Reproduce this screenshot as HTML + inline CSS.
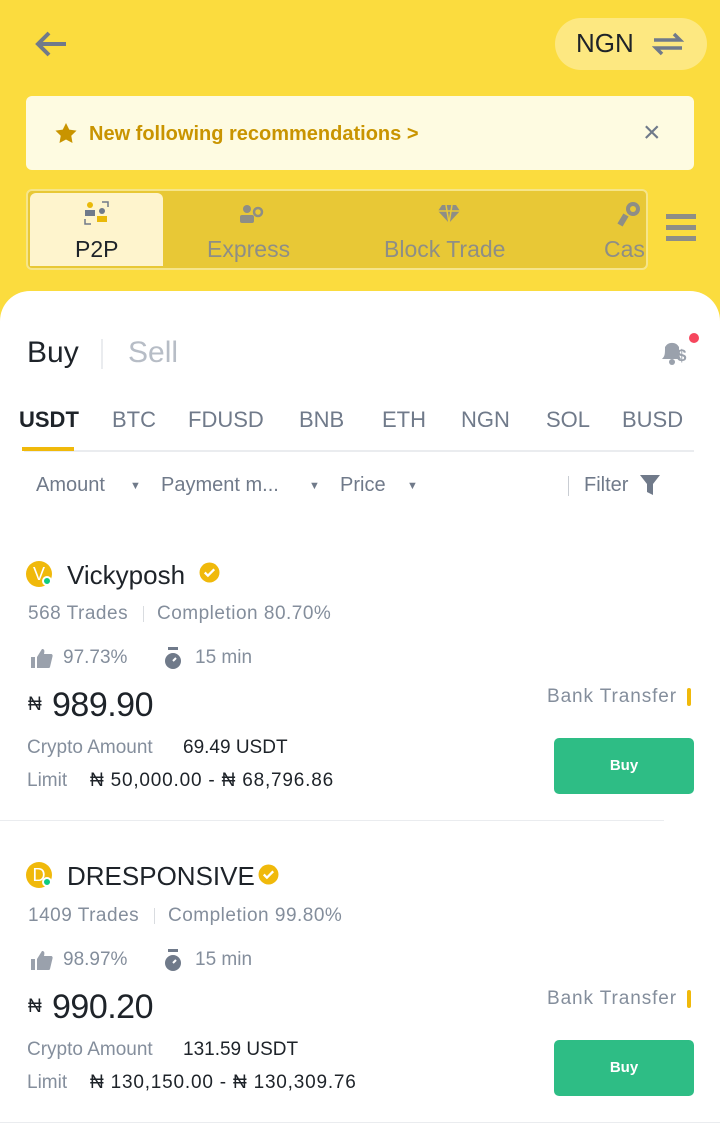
<!DOCTYPE html>
<html><head><meta charset="utf-8"><style>
*{margin:0;padding:0;box-sizing:border-box}
body{width:720px;height:1129px;background:#FBDC3E;font-family:"Liberation Sans",sans-serif;position:relative;overflow:hidden;color:#1E2329}
.a{position:absolute;white-space:nowrap}
.g{color:#848E9C}
.ls{letter-spacing:0.5px}
</style></head><body>
<svg class="a" style="left:34px;top:30px" width="34" height="28" viewBox="0 0 34 28"><path d="M32 14H4M15 3L4 14l11 11" fill="none" stroke="#707A8A" stroke-width="4"/></svg>
<div class="a" style="left:555px;top:18px;width:152px;height:52px;border-radius:26px;background:#FDE881"></div>
<div class="a" style="left:576px;top:28px;font-size:26px;color:#1E2329">NGN</div>
<svg class="a" style="left:652px;top:32px" width="32" height="24" viewBox="0 0 32 24"><path d="M2 8h26l-6-6M30 16H4l6 6" fill="none" stroke="#707A8A" stroke-width="3.5"/></svg>
<div class="a" style="left:26px;top:96px;width:668px;height:74px;background:#FEFBE1;border-radius:6px"></div>
<svg class="a" style="left:54px;top:122px" width="24" height="23" viewBox="0 0 24 24"><path d="M12 1l3.4 7 7.6 1-5.5 5.3 1.3 7.6L12 18.3 5.2 21.9l1.3-7.6L1 9l7.6-1z" fill="#C99400"/></svg>
<div class="a" style="left:89px;top:123px;font-size:20px;color:#C99400;font-weight:bold">New following recommendations &gt;</div>
<div class="a" style="left:643px;top:116px;font-size:30px;color:#707A8A">×</div>
<div class="a" style="left:26px;top:189px;width:622px;height:81px;background:#E8C836;border:2px solid #F6E58A;border-radius:6px"></div>
<div class="a" style="left:30px;top:193px;width:133px;height:73px;background:#FEF4CD;border-radius:6px 6px 0 0"></div>
<svg class="a" style="left:84px;top:200px" width="26" height="26" viewBox="0 0 26 26"><circle cx="6" cy="5" r="3" fill="#E9B909"/><rect x="1" y="10" width="10" height="6" fill="#707A8A"/><circle cx="18" cy="11" r="3" fill="#707A8A"/><rect x="13" y="16" width="10" height="6" fill="#E9B909"/><path d="M18 2h6v5M1 19v5h6" fill="none" stroke="#707A8A" stroke-width="1.5"/></svg>
<div class="a" style="left:75px;top:236px;font-size:23px;color:#1E2329">P2P</div>
<svg class="a" style="left:240px;top:204px" width="24" height="20" viewBox="0 0 24 20"><circle cx="7" cy="5" r="4" fill="#8E8E86"/><rect x="0" y="11" width="14" height="8" rx="2" fill="#8E8E86"/><circle cx="18" cy="8" r="4" fill="none" stroke="#8E8E86" stroke-width="2.5"/></svg>
<div class="a" style="left:207px;top:236px;font-size:23px;color:#8E8E86">Express</div>
<svg class="a" style="left:438px;top:204px" width="22" height="20" viewBox="0 0 22 20"><path d="M4 1h14l4 6-11 12L0 7z" fill="#8E8E86"/><path d="M0 7h22M8 1l3 18 3-18" stroke="#E8C836" stroke-width="1.5" fill="none"/></svg>
<div class="a" style="left:384px;top:236px;font-size:23px;color:#8E8E86">Block Trade</div>
<svg class="a" style="left:617px;top:201px" width="24" height="26" viewBox="0 0 24 26"><circle cx="16" cy="8" r="7" fill="#8E8E86"/><circle cx="16" cy="8" r="3" fill="#E8C836"/><path d="M3 24l6-10" stroke="#8E8E86" stroke-width="6"/></svg>
<div class="a" style="left:604px;top:236px;font-size:23px;color:#8E8E86;width:42px;overflow:hidden">Cash</div>
<div class="a" style="left:666px;top:214px;width:30px;height:5px;background:#8E8E86;box-shadow:0 11px 0 #8E8E86,0 22px 0 #8E8E86"></div>

<div class="a" style="left:0;top:291px;width:720px;height:838px;background:#fff;border-radius:30px 30px 0 0"></div>
<div class="a" style="left:27px;top:336px;font-size:30px">Buy</div>
<div class="a" style="left:101px;top:339px;width:2px;height:30px;background:#EAECEF"></div>
<div class="a" style="left:128px;top:336px;font-size:30px;color:#B7BDC6">Sell</div>
<svg class="a" style="left:660px;top:332px" width="40" height="34" viewBox="0 0 40 34"><path d="M3 27h18c-2-3-2-5-2-12a8 8 0 0 0-14 0c0 7 0 9-3 12z" fill="#9AA1AC"/><circle cx="12" cy="30" r="3" fill="#9AA1AC"/><text x="17" y="29" font-size="17" font-weight="bold" fill="#9AA1AC" font-family="Liberation Sans">$</text><circle cx="34" cy="6" r="5" fill="#F6465D"/></svg>
<div class="a" style="top:407px;left:19px;font-size:22px;font-weight:bold">USDT</div>
<div class="a" style="top:407px;left:112px;font-size:22px;color:#707A8A">BTC</div>
<div class="a" style="top:407px;left:188px;font-size:22px;color:#707A8A">FDUSD</div>
<div class="a" style="top:407px;left:299px;font-size:22px;color:#707A8A">BNB</div>
<div class="a" style="top:407px;left:382px;font-size:22px;color:#707A8A">ETH</div>
<div class="a" style="top:407px;left:461px;font-size:22px;color:#707A8A">NGN</div>
<div class="a" style="top:407px;left:546px;font-size:22px;color:#707A8A">SOL</div>
<div class="a" style="top:407px;left:622px;font-size:22px;color:#707A8A">BUSD</div>
<div class="a" style="left:24px;top:450px;width:670px;height:2px;background:#EAECEF"></div>
<div class="a" style="left:22px;top:447px;width:52px;height:4px;background:#F0B90B"></div>
<div class="a" style="top:474px;left:36px;font-size:20px;color:#707A8A">Amount</div>
<div class="a" style="top:474px;left:161px;font-size:20px;color:#707A8A">Payment m...</div>
<div class="a" style="top:474px;left:340px;font-size:20px;color:#707A8A">Price</div>
<div class="a" style="top:480px;left:130px;font-size:11px;color:#707A8A">▼</div>
<div class="a" style="top:480px;left:309px;font-size:11px;color:#707A8A">▼</div>
<div class="a" style="top:480px;left:407px;font-size:11px;color:#707A8A">▼</div>
<div class="a" style="left:568px;top:476px;width:1px;height:20px;background:#C9CDD3"></div>
<div class="a" style="top:474px;left:584px;font-size:20px;color:#707A8A">Filter</div>
<svg class="a" style="left:640px;top:475px" width="20" height="20" viewBox="0 0 20 20"><path d="M0 0h20l-7 9v11l-6-3V9z" fill="#707A8A"/></svg>

<!-- card 1 -->
<div class="a" style="left:26px;top:561px;width:26px;height:26px;border-radius:50%;background:#F0B90B;color:#fff;font-size:18px;text-align:center;line-height:26px">V</div>
<div class="a" style="left:42px;top:576px;width:10px;height:10px;border-radius:50%;background:#0ECB81;border:2px solid #fff"></div>
<div class="a" style="left:67px;top:560px;font-size:26px">Vickyposh</div>
<svg class="a" style="left:199px;top:562px" width="21" height="21" viewBox="0 0 20 20"><circle cx="10" cy="10" r="9.5" fill="#F0B90B"/><path d="M5.5 10l3 3 6-6" stroke="#fff" stroke-width="2.2" fill="none"/></svg>
<div class="a g ls" style="left:28px;top:603px;font-size:19px">568 Trades</div>
<div class="a" style="left:143px;top:606px;width:1px;height:16px;background:#D9DCE0"></div>
<div class="a g ls" style="left:157px;top:603px;font-size:19px">Completion 80.70%</div>
<svg class="a" style="left:31px;top:649px" width="22" height="20" viewBox="0 0 22 20"><rect x="0" y="8" width="4" height="11" fill="#9AA1AC"/><path d="M6 8l5-8c2 0 3 1 2 5h7c1 0 2 1 1.5 2.5L19 18c-.3 1-1 1-2 1H6z" fill="#9AA1AC"/></svg>
<div class="a g" style="left:63px;top:647px;font-size:19px">97.73%</div>
<svg class="a" style="left:163px;top:647px" width="20" height="23" viewBox="0 0 20 23"><rect x="5" y="0" width="10" height="3" fill="#707A8A"/><circle cx="10" cy="14" r="8" fill="#707A8A"/><path d="M10 14l3-3" stroke="#fff" stroke-width="2"/></svg>
<div class="a g" style="left:195px;top:647px;font-size:19px">15 min</div>
<div class="a" style="left:28px;top:694px;font-size:19px">₦</div>
<div class="a" style="left:52px;top:686px;font-size:34px;letter-spacing:-0.5px">989.90</div>
<div class="a g" style="left:27px;top:737px;font-size:19px">Crypto Amount</div>
<div class="a" style="left:183px;top:737px;font-size:19px">69.49 USDT</div>
<div class="a g" style="left:27px;top:770px;font-size:19px">Limit</div>
<div class="a" style="left:90px;top:770px;font-size:19px;letter-spacing:0.8px">₦ 50,000.00 - ₦ 68,796.86</div>
<div class="a g" style="left:547px;top:686px;font-size:19px;letter-spacing:0.9px">Bank Transfer</div>
<div class="a" style="left:687px;top:688px;width:4px;height:18px;border-radius:2px;background:#F0B90B"></div>
<div class="a" style="left:554px;top:738px;width:140px;height:56px;background:#2EBD85;border-radius:5px;color:#fff;font-size:15px;font-weight:bold;text-align:center;line-height:56px">Buy</div>
<div class="a" style="left:0;top:820px;width:664px;height:1px;background:#EAECEF"></div>

<!-- card 2 -->
<div class="a" style="left:26px;top:862px;width:26px;height:26px;border-radius:50%;background:#F0B90B;color:#fff;font-size:18px;text-align:center;line-height:26px">D</div>
<div class="a" style="left:42px;top:877px;width:10px;height:10px;border-radius:50%;background:#0ECB81;border:2px solid #fff"></div>
<div class="a" style="left:67px;top:861px;font-size:26px">DRESPONSIVE</div>
<svg class="a" style="left:258px;top:864px" width="21" height="21" viewBox="0 0 20 20"><circle cx="10" cy="10" r="9.5" fill="#F0B90B"/><path d="M5.5 10l3 3 6-6" stroke="#fff" stroke-width="2.2" fill="none"/></svg>
<div class="a g ls" style="left:28px;top:905px;font-size:19px">1409 Trades</div>
<div class="a" style="left:154px;top:908px;width:1px;height:16px;background:#D9DCE0"></div>
<div class="a g ls" style="left:168px;top:905px;font-size:19px">Completion 99.80%</div>
<svg class="a" style="left:31px;top:951px" width="22" height="20" viewBox="0 0 22 20"><rect x="0" y="8" width="4" height="11" fill="#9AA1AC"/><path d="M6 8l5-8c2 0 3 1 2 5h7c1 0 2 1 1.5 2.5L19 18c-.3 1-1 1-2 1H6z" fill="#9AA1AC"/></svg>
<div class="a g" style="left:63px;top:949px;font-size:19px">98.97%</div>
<svg class="a" style="left:163px;top:949px" width="20" height="23" viewBox="0 0 20 23"><rect x="5" y="0" width="10" height="3" fill="#707A8A"/><circle cx="10" cy="14" r="8" fill="#707A8A"/><path d="M10 14l3-3" stroke="#fff" stroke-width="2"/></svg>
<div class="a g" style="left:195px;top:949px;font-size:19px">15 min</div>
<div class="a" style="left:28px;top:996px;font-size:19px">₦</div>
<div class="a" style="left:52px;top:988px;font-size:34px;letter-spacing:-0.5px">990.20</div>
<div class="a g" style="left:27px;top:1039px;font-size:19px">Crypto Amount</div>
<div class="a" style="left:183px;top:1039px;font-size:19px">131.59 USDT</div>
<div class="a g" style="left:27px;top:1072px;font-size:19px">Limit</div>
<div class="a" style="left:90px;top:1072px;font-size:19px;letter-spacing:0.8px">₦ 130,150.00 - ₦ 130,309.76</div>
<div class="a g" style="left:547px;top:988px;font-size:19px;letter-spacing:0.9px">Bank Transfer</div>
<div class="a" style="left:687px;top:990px;width:4px;height:18px;border-radius:2px;background:#F0B90B"></div>
<div class="a" style="left:554px;top:1040px;width:140px;height:56px;background:#2EBD85;border-radius:5px;color:#fff;font-size:15px;font-weight:bold;text-align:center;line-height:56px">Buy</div>
<div class="a" style="left:0;top:1122px;width:720px;height:1px;background:#EAECEF"></div>
</body></html>
